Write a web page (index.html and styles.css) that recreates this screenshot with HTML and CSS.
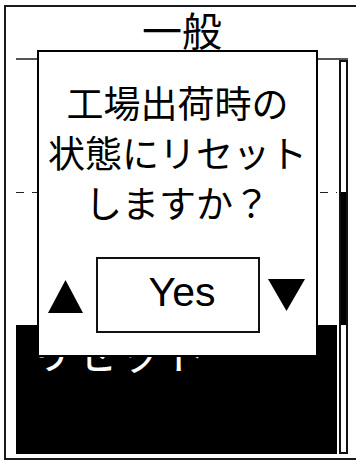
FILE: index.html
```html
<!DOCTYPE html>
<html lang="ja">
<head>
<meta charset="utf-8">
<title>一般</title>
<link rel="stylesheet" href="styles.css">
</head>
<body>
<div class="device">
  <div class="screen">
    <h1 class="title">一般</h1>
    <div class="divider"></div>
    <div class="body">
      <div class="list">
        <div class="row"></div>
        <div class="dash"></div>
        <div class="row"></div>
        <div class="row row-selected"><span class="row-label">リセット</span></div>
      </div>
      <div class="scrollbar"><div class="thumb"></div></div>
    </div>
  </div>
  <div class="dialog">
    <p class="dialog-text">工場出荷時の<br>状態にリセット<br>しますか？</p>
    <div class="controls">
      <svg class="arrow-up" viewBox="0 0 35 33" aria-hidden="true"><polygon points="17.5,0 35,33 0,33" fill="#000"/></svg>
      <div class="choice">Yes</div>
      <svg class="arrow-down" viewBox="0 0 37 32" aria-hidden="true"><polygon points="0,0 37,0 18.5,32" fill="#000"/></svg>
    </div>
  </div>
</div>
</body>
</html>
```

FILE: styles.css
```css
* {
  box-sizing: border-box;
}

html,
body {
  margin: 0;
  overflow: hidden;
  background: #fff;
  font-family: "Noto Sans CJK JP", "Noto Sans", sans-serif;
  color: #000;
}

.device {
  position: relative;
  margin: 5px 0 0 4px;
  width: 352px;
  height: 455px;
  border: 2px solid #1a1a1a;
  border-right: none;
  padding-left: 10px;
}

.screen {
  width: 332px;
  display: flex;
  flex-direction: column;
}

.title {
  margin: 0;
  height: 51px;
  font-size: 40px;
  font-weight: 400;
  line-height: 44px;
  text-align: center;
}

.divider {
  height: 2px;
  background: #555;
}

.body {
  display: flex;
  gap: 2px;
  height: 394px;
}

.list {
  width: 321px;
  display: flex;
  flex-direction: column;
}

.row {
  height: 132px;
}

.dash {
  height: 1px;
  background: repeating-linear-gradient(90deg, #222 0 8px, transparent 8px 16px);
}

.row-selected {
  height: 129px;
  background: #000;
  color: #fff;
  padding: 4px 0 0 14px;
  font-size: 44px;
  line-height: 44px;
}

.scrollbar {
  width: 9px;
  border: 2px solid #111;
}

.thumb {
  margin-top: 130px;
  height: 133px;
  background: #000;
}

.dialog {
  position: absolute;
  left: 31px;
  top: 43px;
  width: 281px;
  height: 307px;
  border: 2px solid #000;
  background: #fff;
  padding: 25px 0 22px;
}

.dialog-text {
  margin: 0;
  font-size: 37px;
  line-height: 50px;
  text-align: center;
}

.controls {
  margin-top: 30px;
  height: 76px;
  display: flex;
  align-items: center;
  padding-left: 9px;
}

.arrow-up {
  width: 35px;
  height: 33px;
  margin-top: 3px;
}

.choice {
  margin-left: 13px;
  width: 164px;
  height: 76px;
  border: 2px solid #111;
  font-family: "Liberation Sans", Arial, sans-serif;
  font-size: 41px;
  line-height: 67px;
  padding: 0 0 5px 8px;
  text-align: center;
}

.arrow-down {
  margin-left: 8px;
  width: 37px;
  height: 32px;
}
```
